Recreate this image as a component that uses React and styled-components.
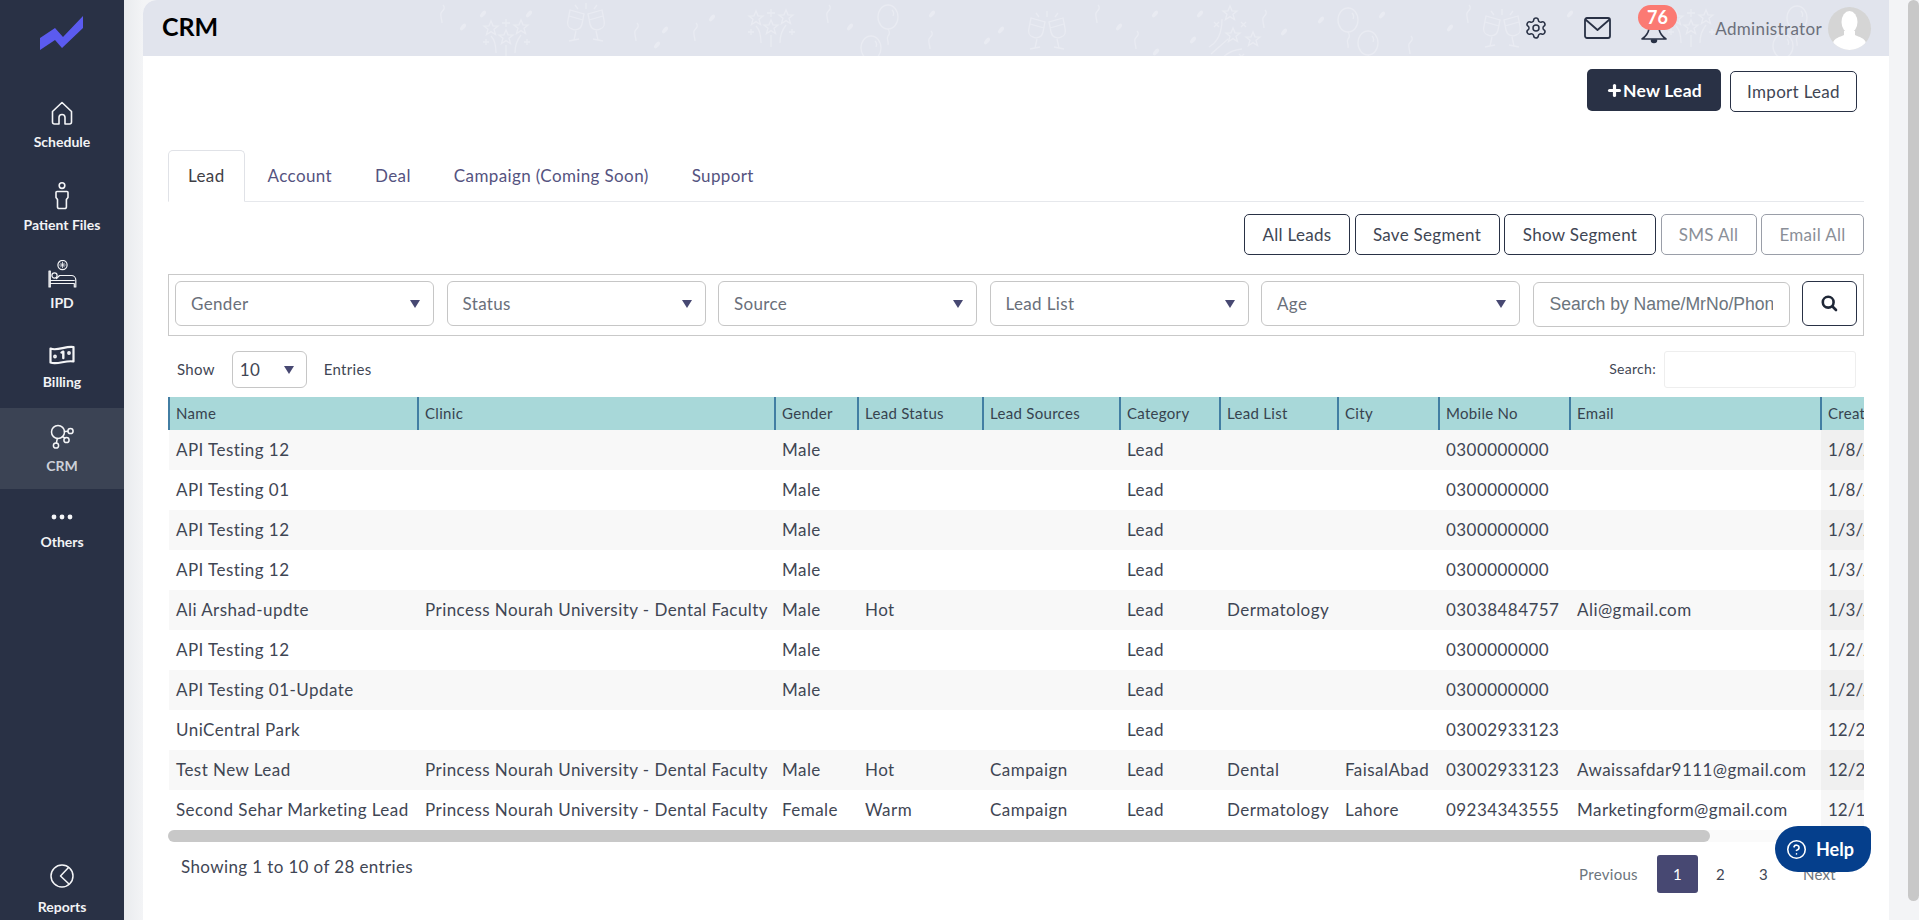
import React from "react";
import styled, { createGlobalStyle } from "styled-components";
import { Settings, CircleHelp, Plus } from "lucide-react";

const GlobalStyle = createGlobalStyle`
  html, body {
    margin: 0;
    height: 100%;
    overflow: hidden;
    background: #f3f4f6;
    font-family: "Lato", "Noto Sans", sans-serif;
    color: #3f4654;
  }
  * { box-sizing: border-box; }
`;

const Page = styled.div`
  display: flex;
  height: 920px;
  overflow: hidden;
`;

/* sidebar */
const Sidebar = styled.aside`
  flex: 0 0 124px;
  display: flex;
  flex-direction: column;
  background: #293145;
`;
const LogoBox = styled.div`
  height: 85px;
  flex: none;
`;
const SideItem = styled.div`
  height: ${(p) => (p.$last ? "72px" : "80.75px")};
  flex: none;
  margin-top: ${(p) => (p.$last ? "auto" : "0")};
  padding-top: 16px;
  display: flex;
  flex-direction: column;
  align-items: center;
  background: ${(p) => (p.$active ? "#3b4354" : "transparent")};
`;
const SideIcon = styled.div`
  height: 24px;
  display: flex;
  align-items: center;
  justify-content: center;
  overflow: visible;
`;
const SideLabel = styled.div`
  margin-top: ${(p) => p.$gap ?? 8}px;
  line-height: 18px;
  font-size: 14px;
  font-weight: 700;
  color: ${(p) => (p.$active ? "#ccd0d8" : "#f2f3f5")};
`;

/* main column */
const Gutter = styled.div`
  flex: 1;
  min-width: 0;
  padding: 0 30px 0 19px;
  background: linear-gradient(90deg, #e9ebee 0, #f3f4f6 19px);
`;
const Card = styled.main`
  position: relative;
  height: 920px;
  background: #fff;
  border-top-left-radius: 14px;
  overflow: hidden;
`;
const Header = styled.header`
  position: relative;
  height: 56px;
  display: flex;
  align-items: center;
  padding-left: 19px;
  background: #e1e4ed;
  overflow: hidden;
`;
const Decor = styled.svg`
  position: absolute;
  left: 0;
  top: 0;
  fill: none;
  stroke: #e9ebf2;
  stroke-width: 1.3;
`;
const Title = styled.h1`
  position: relative;
  margin: 0 0 4px;
  font-size: 25px;
  font-weight: 700;
  color: #000;
`;
const HeaderRight = styled.div`
  position: relative;
  margin-left: auto;
  display: flex;
  align-items: center;
  padding-right: 18px;
  height: 100%;
  color: #293145;
`;
const IconGap = styled.div`
  width: 36px;
`;
const BellWrap = styled.div`
  position: relative;
  width: 30px;
  height: 30px;
  margin: 3px 0 0 28px;
`;
const Badge = styled.span`
  position: absolute;
  left: -1px;
  top: -10px;
  width: 39px;
  height: 25px;
  border-radius: 13px;
  background: #fb7a73;
  color: #fff;
  font-size: 18px;
  font-weight: 700;
  line-height: 25px;
  text-align: center;
`;
const UserName = styled.span`
  margin-left: auto;
  font-size: 17px;
  color: #6c707b;
  letter-spacing: 0.35px;
`;
const UserBlock = styled.div`
  display: flex;
  align-items: center;
  width: 202px;
`;
const Avatar = styled.div`
  width: 43px;
  height: 43px;
  margin-left: 6px;
  border-radius: 50%;
  background: #d5d5d5;
  overflow: hidden;
`;

const Body = styled.div`
  padding: 0 25px;
`;
const TopActions = styled.div`
  display: flex;
  justify-content: flex-end;
  align-items: flex-end;
  gap: 9px;
  height: 42px;
  margin-top: 14px;
  padding-right: 7px;
`;
const Button = styled.button`
  width: ${(p) => p.$w}px;
  height: 41px;
  padding: 0;
  border: 1px solid ${(p) => (p.$muted ? "#9a9ea8" : "#293145")};
  border-radius: 5px;
  background: #fff;
  color: ${(p) => (p.$muted ? "#8b8f98" : "#3f4654")};
  font-family: inherit;
  font-size: 17px;
  letter-spacing: 0.3px;
  white-space: nowrap;
`;
const PrimaryButton = styled.button`
  display: flex;
  align-items: center;
  justify-content: center;
  width: 134px;
  height: 42px;
  margin-bottom: 1px;
  border: 0;
  border-radius: 5px;
  background: #293145;
  color: #fff;
  font-family: inherit;
  font-size: 17.5px;
  font-weight: 700;
  letter-spacing: 0.2px;
`;

const Tabs = styled.nav`
  display: flex;
  height: 52px;
  margin-top: 38px;
  border-bottom: 1px solid #e6e8ec;
`;
const Tab = styled.div`
  height: ${(p) => (p.$active ? "52px" : "51px")};
  padding: 0 19px;
  border: 1px solid ${(p) => (p.$active ? "#e0e2e7" : "transparent")};
  border-bottom: ${(p) => (p.$active ? "1px solid #fff" : "0")};
  border-radius: 5px 5px 0 0;
  margin-right: 3px;
  line-height: 50px;
  font-size: 17px;
  letter-spacing: 0.38px;
  color: ${(p) => (p.$active ? "#3f3f46" : "#55537f")};
`;

const SegmentRow = styled.div`
  display: flex;
  justify-content: flex-end;
  gap: 4.5px;
  margin-top: 12px;
`;

const FilterBox = styled.div`
  display: grid;
  grid-template-columns: repeat(5, 259px) 257px 55px;
  justify-content: space-between;
  align-items: start;
  height: 62px;
  margin-top: 19px;
  padding: 6px 6px 0;
  border: 1px solid #c9c9c9;
`;
const Select = styled.div`
  display: flex;
  align-items: center;
  justify-content: space-between;
  height: 45px;
  padding: 0 13px 0 15px;
  border: 1px solid #c6c6c6;
  border-radius: 6px;
  font-size: 17px;
  letter-spacing: 0.35px;
  color: #6a6f7a;
`;
const Caret = styled.span`
  width: 0;
  height: 0;
  border-left: 5.5px solid transparent;
  border-right: 5.5px solid transparent;
  border-top: 8px solid #474872;
`;
const SearchInput = styled.input`
  width: 100%;
  height: 45px;
  margin-top: 1px;
  padding: 0 16px;
  border: 1px solid #c6c6c6;
  border-radius: 6px;
  font-family: "Liberation Sans", Arial, sans-serif;
  font-size: 17.6px;
  outline: none;
  &::placeholder { color: #6c757d; opacity: 1; }
`;
const SearchButton = styled.button`
  display: flex;
  align-items: center;
  justify-content: center;
  height: 45px;
  padding: 0;
  border: 1px solid #293145;
  border-radius: 6px;
  background: #fff;
`;

const ShowRow = styled.div`
  display: flex;
  align-items: center;
  height: 37px;
  margin-top: 15px;
  padding: 0 8px 2px 9px;
  font-size: 15px;
  letter-spacing: 0.3px;
  color: #3f4654;
`;
const EntriesSelect = styled(Select)`
  width: 75px;
  height: 37px;
  margin: 2px 17px 0 17px;
  padding: 0 12px 0 7px;
  color: #3f4654;
`;
const SearchLabel = styled.label`
  margin-left: auto;
  margin-right: 8px;
  font-size: 14px;
`;
const TableSearch = styled.input`
  width: 192px;
  height: 37px;
  margin-top: 2px;
  border: 1px solid #eeeeee;
  border-radius: 3px;
  outline: none;
`;

const TableClip = styled.div`
  margin-top: 9px;
  overflow: hidden;
`;
const Table = styled.table`
  width: 1816px;
  table-layout: fixed;
  border-collapse: collapse;
`;
const Th = styled.th`
  height: 33px;
  padding: 0 0 2px 6px;
  border-left: 2px solid #427ea3;
  background: #a8d8d9;
  font-size: 15px;
  font-weight: 400;
  letter-spacing: 0.3px;
  text-align: left;
  color: #37434f;
  white-space: nowrap;
  overflow: hidden;
`;
const Tr = styled.tr`
  background: ${(p) => (p.$odd ? "#f8f8f8" : "#fff")};
`;
const Td = styled.td`
  height: 40px;
  padding: 0 0 1px 7px;
  font-size: 17px;
  letter-spacing: ${(p) => (p.$sorted ? "0" : "0.45px")};
  color: #3f4654;
  white-space: nowrap;
  overflow: hidden;
  background: ${(p) => (p.$sorted ? "rgba(0,0,0,0.03)" : "transparent")};
`;
const ScrollTrack = styled.div`
  height: 12px;
  background: #fafafa;
  border-radius: 6px;
`;
const ScrollThumb = styled.div`
  height: 100%;
  border-radius: 6px;
  background: #c8c8c8;
`;

const Footer = styled.div`
  display: flex;
  justify-content: space-between;
  align-items: flex-start;
  margin-top: 13px;
  padding: 0 11px 0 13px;
`;
const Info = styled.div`
  margin-top: -1px;
  line-height: 26px;
  font-size: 17px;
  letter-spacing: 0.38px;
`;
const Pager = styled.div`
  display: flex;
  gap: 2px;
`;
const PageLink = styled.div`
  min-width: 41px;
  height: 38px;
  padding: 0 ${(p) => (p.$text ? "17px" : "0")};
  border-radius: 3px;
  background: ${(p) => (p.$active ? "#474872" : "transparent")};
  color: ${(p) => (p.$active ? "#fff" : p.$text ? "#6c757d" : "#3f4654")};
  font-size: 15px;
  line-height: 38px;
  text-align: center;
  letter-spacing: 0.3px;
`;

const HelpButton = styled.button`
  position: fixed;
  left: 1775px;
  top: 826px;
  display: flex;
  align-items: center;
  gap: 9px;
  width: 96px;
  height: 46px;
  padding: 0 0 0 11px;
  border: 0;
  border-radius: 24px 8px 24px 24px;
  background: #053f8c;
  color: #fff;
  font-family: inherit;
  font-size: 18px;
  font-weight: 700;
`;
const PageScrollThumb = styled.div`
  position: fixed;
  right: 0;
  top: 0;
  width: 11px;
  height: 901px;
  border-radius: 6px;
  background: #c8c8c8;
`;

const columns = [
  ["Name", 249],
  ["Clinic", 357],
  ["Gender", 83],
  ["Lead Status", 125],
  ["Lead Sources", 137],
  ["Category", 100],
  ["Lead List", 118],
  ["City", 101],
  ["Mobile No", 131],
  ["Email", 251],
  ["Created On", 164],
];

const PNU = "Princess Nourah University - Dental Faculty";
const rows = [
  ["API Testing 12", "", "Male", "", "", "Lead", "", "", "0300000000", "", "1/8/2024"],
  ["API Testing 01", "", "Male", "", "", "Lead", "", "", "0300000000", "", "1/8/2024"],
  ["API Testing 12", "", "Male", "", "", "Lead", "", "", "0300000000", "", "1/3/2024"],
  ["API Testing 12", "", "Male", "", "", "Lead", "", "", "0300000000", "", "1/3/2024"],
  ["Ali Arshad-updte", PNU, "Male", "Hot", "", "Lead", "Dermatology", "", "03038484757", "Ali@gmail.com", "1/3/2024"],
  ["API Testing 12", "", "Male", "", "", "Lead", "", "", "0300000000", "", "1/2/2024"],
  ["API Testing 01-Update", "", "Male", "", "", "Lead", "", "", "0300000000", "", "1/2/2024"],
  ["UniCentral Park", "", "", "", "", "Lead", "", "", "03002933123", "", "12/28/2023"],
  ["Test New Lead", PNU, "Male", "Hot", "Campaign", "Lead", "Dental", "FaisalAbad", "03002933123", "Awaissafdar9111@gmail.com", "12/20/2023"],
  ["Second Sehar Marketing Lead", PNU, "Female", "Warm", "Campaign", "Lead", "Dermatology", "Lahore", "09234343555", "Marketingform@gmail.com", "12/19/2023"],
];

const Logo = () => (
  <svg width="124" height="85" viewBox="0 0 124 85">
    <polygon points="40,50 40,38 55,28 63,37 83,16 83,28 62,48 55,40" fill="#5b5bf0" />
  </svg>
);

const line = { fill: "none", stroke: "#f4f5f7", strokeLinecap: "round", strokeLinejoin: "round" };

const HomeIcon = () => (
  <svg width="24" height="24" viewBox="0 0 24 24" {...line} strokeWidth="1.6">
    <path d="M2.5 10.5 12 1.500l9.500 9V21a2 2 0 0 1-2 2H15v-6.500a3 3 0 0 0-6 0V23H4.500a2 2 0 0 1-2-2Z" />
  </svg>
);
const PersonIcon = () => (
  <svg width="14" height="28" viewBox="0 0 14 28" {...line} strokeWidth="1.6" style={{ marginTop: 4 }}>
    <circle cx="7" cy="3.600" r="2.800" />
    <path d="M2 9.500h10a1 1 0 0 1 1 1v5l-1.600 2v7.500a1.500 1.500 0 0 1-1.500 1.500H4a1.500 1.500 0 0 1-1.500-1.500V17.500L1 15.500v-5a1 1 0 0 1 1-1Z" />
  </svg>
);
const BedIcon = () => (
  <svg width="29" height="28" viewBox="0 0 29 28" {...line} strokeWidth="1.200" style={{ marginTop: -2 }}>
    <circle cx="14.500" cy="5" r="4.600" />
    <path d="M14.500 2.200v5.600M11.700 5h5.600M12.500 3l4 4M16.500 3l-4 4" strokeWidth=".8" />
    <path d="M1 11v16h1.300V11ZM2.300 23.500h24v3.500h1.500v-7a4.500 4.500 0 0 0-4.500-4.500H11.500l-3 3" />
    <path d="M2.300 20.500h24" />
    <circle cx="6.500" cy="15.500" r="2.600" />
  </svg>
);
const BillIcon = () => (
  <svg width="26" height="20" viewBox="0 0 26 20" {...line} strokeWidth="2.200">
    <path d="M1.500 3.500C8 6.500 17 .5 24.500 2v14.500C17 15 8 20 1.500 17.500Z" />
    <path d="M12.500 7.500l1.800-.8v6.300" strokeWidth="2.400" />
    <circle cx="6" cy="11.500" r=".8" />
    <circle cx="20" cy="8" r=".8" />
  </svg>
);
const CrmIcon = () => (
  <svg width="26" height="26" viewBox="0 0 26 26" {...line} strokeWidth="1.500">
    <circle cx="9" cy="9" r="6.500" />
    <circle cx="21.500" cy="8" r="2.600" />
    <circle cx="17.500" cy="17" r="2.600" />
    <circle cx="7" cy="22.500" r="2.600" />
    <path d="M15.500 8.600 18.900 8.200M13.500 13.700l2.400 1.300M8.300 15.500 7.400 19.900" />
  </svg>
);
const DotsIcon = () => (
  <svg width="22" height="6" viewBox="0 0 22 6" fill="#f4f5f7">
    <circle cx="3" cy="3" r="2.400" />
    <circle cx="11" cy="3" r="2.400" />
    <circle cx="19" cy="3" r="2.400" />
  </svg>
);
const ReportsIcon = () => (
  <svg width="24" height="24" viewBox="0 0 24 24" {...line} strokeWidth="1.500">
    <circle cx="12" cy="12" r="11" />
    <path d="M18.500 3.500 10.500 12l8.500 8" />
  </svg>
);

const MailIcon = () => (
  <svg width="27" height="22" viewBox="0 0 27 22" fill="none" stroke="#293145" strokeWidth="1.800" strokeLinejoin="round">
    <rect x="1" y="1" width="25" height="20" rx="2" />
    <path d="M1.500 2.500 13.500 13l12-10.500" />
  </svg>
);
const BellIcon = () => (
  <svg width="30" height="30" viewBox="0 0 30 30" fill="none" stroke="#293145" strokeWidth="1.600" strokeLinejoin="round">
    <path d="M3 24c3-2 6-5 7-10 1-4 2-6 5-6s4 2 5 6c1 5 4 8 7 10Z" />
    <path d="M12.500 25a2.500 2.500 0 0 0 5 0Z" fill="#293145" />
  </svg>
);
const AvatarShape = () => (
  <svg width="43" height="43" viewBox="0 0 43 43" fill="#fff">
    <ellipse cx="21.500" cy="15" rx="8" ry="11" />
    <path d="M16 24h11v4c4 2 10 3 11 8v7H5v-7c1-5 7-6 11-8Z" />
  </svg>
);
const SearchGlyph = () => (
  <svg width="17" height="17" viewBox="0 0 17 17" fill="none" stroke="#1f2737" strokeWidth="2.600" strokeLinecap="round">
    <circle cx="7.200" cy="7.200" r="5.400" />
    <path d="M11.500 11.500 15 15" />
  </svg>
);

const sprites = (
  <defs>
    <path id="sq" d="M3 0c3 3 0 5-2 8-1 3 1 6 1 10" />
    <ellipse id="lf" rx="2" ry="4" transform="rotate(40)" fill="#e9ebf2" stroke="none" />
    <g id="star5">
      <path d="M0-7 2-2.200 7-2 3 1.200 4.500 6.500 0 3.600-4.500 6.500-3 1.200-7-2-2-2.200Z" />
    </g>
    <g id="fw">
      <use href="#star5" x="-14" y="-8" />
      <use href="#star5" x="16" y="-9" />
      <use href="#star5" x="1" y="1" />
      <path d="M-14 0c4 4 5 10 5 17M16-1c-4 5-6 11-6 18M1 9v12M1-17v8M-3-13h8M-22 6h6M-19 3v6M19 6h6M22 3v6" />
    </g>
    <g id="glass">
      <path d="M-16-14-2-10l-2 10c-1 5-6 7-10 5-4-1-5-5-4-9ZM-17-8l14 4M-10 7-12 16M-17 17l10-2" />
      <path d="M16-14 2-10l2 10c1 5 6 7 10 5 4-1 5-5 4-9ZM17-8 3-4M10 7 12 16M17 17 7 15" />
      <path d="M0-15v-6M-8-15l-3-4M8-15l3-4" />
    </g>
    <g id="ball">
      <ellipse cx="0" cy="0" rx="10" ry="12" />
      <path d="M0 12c2 3 2 5 0 7-2 3 1 5 0 9M4-7c2 2 2 4 1 6" />
    </g>
    <g id="shoot">
      <use href="#star5" x="0" y="-19" />
      <use href="#star5" x="3" y="3" />
      <use href="#star5" x="23" y="7" />
      <path d="M-21 15c9-5 13-15 13-28M-19 22-2 7M-12 34c4-11 14-16 24-17M-16-10l5 5M-11-10l-5 5M11-10l5 5M16-10l-5 5M9 22l5 5M14 22l-5 5" />
    </g>
  </defs>
);

// page coordinates read off the reference, minus the card's x of 143
const place = (id, x, y) => <use key={`${id}${x}${y}`} href={`#${id}`} x={x - 143} y={y} />;
const decorItems = [
  ["sq", 440, 5], ["lf", 463, 27], ["lf", 483, 14], ["lf", 529, 14], ["fw", 505, 36], ["glass", 586, 24],
  ["sq", 634, 23], ["lf", 665, 30], ["lf", 657, 45], ["sq", 693, 23], ["lf", 712, 18], ["fw", 770, 26],
  ["sq", 826, 5], ["lf", 850, 27], ["ball", 888, 17], ["ball", 871, 48], ["lf", 932, 14], ["sq", 928, 31],
  ["lf", 1001, 30], ["lf", 987, 41], ["glass", 1047, 32], ["sq", 1095, 5], ["lf", 1119, 27], ["lf", 1155, 14],
  ["sq", 1134, 31], ["lf", 1156, 52], ["lf", 1193, 40], ["lf", 1200, 14], ["shoot", 1230, 32], ["sq", 1262, 10],
  ["lf", 1284, 32], ["lf", 1321, 20], ["ball", 1348, 20], ["ball", 1368, 43], ["lf", 1382, 15], ["sq", 1408, 36],
  ["lf", 1450, 28], ["sq", 1466, 5], ["glass", 1502, 30], ["lf", 1570, 14], ["fw", 1690, 26], ["ball", 1797, 18],
  ["ball", 1783, 46],
];

const navItems = [
  ["Schedule", HomeIcon, 8],
  ["Patient Files", PersonIcon, 10],
  ["IPD", BedIcon, 7],
  ["Billing", BillIcon, 6],
  ["CRM", CrmIcon, 9],
  ["Others", DotsIcon, 4],
];

export default function App() {
  return (
    <>
      <GlobalStyle />
      <Page>
        <Sidebar>
          <LogoBox>
            <Logo />
          </LogoBox>
          {navItems.map(([label, Icon, gap]) => (
            <SideItem key={label} $active={label === "CRM"}>
              <SideIcon><Icon /></SideIcon>
              <SideLabel $gap={gap} $active={label === "CRM"}>{label}</SideLabel>
            </SideItem>
          ))}
          <SideItem $last>
            <SideIcon><ReportsIcon /></SideIcon>
            <SideLabel $gap={10}>Reports</SideLabel>
          </SideItem>
        </Sidebar>

        <Gutter>
          <Card>
            <Header>
              <Decor width="1746" height="56">
                {sprites}
                {decorItems.map(([id, x, y]) => place(id, x, y))}
              </Decor>
              <Title>CRM</Title>
              <HeaderRight>
                <Settings size={24} strokeWidth={1.5} />
                <IconGap />
                <MailIcon />
                <BellWrap>
                  <BellIcon />
                  <Badge>76</Badge>
                </BellWrap>
                <UserBlock>
                  <UserName>Administrator</UserName>
                  <Avatar><AvatarShape /></Avatar>
                </UserBlock>
              </HeaderRight>
            </Header>

            <Body>
              <TopActions>
                <PrimaryButton>
                  <Plus size={17} strokeWidth={4.5} />
                  New Lead
                </PrimaryButton>
                <Button $w={127}>Import Lead</Button>
              </TopActions>

              <Tabs>
                <Tab $active>Lead</Tab>
                <Tab>Account</Tab>
                <Tab>Deal</Tab>
                <Tab>Campaign (Coming Soon)</Tab>
                <Tab>Support</Tab>
              </Tabs>

              <SegmentRow>
                <Button $w={106}>All Leads</Button>
                <Button $w={145}>Save Segment</Button>
                <Button $w={152}>Show Segment</Button>
                <Button $w={96} $muted>SMS All</Button>
                <Button $w={103} $muted>Email All</Button>
              </SegmentRow>

              <FilterBox>
                {["Gender", "Status", "Source", "Lead List", "Age"].map((name) => (
                  <Select key={name}>
                    {name}
                    <Caret />
                  </Select>
                ))}
                <SearchInput placeholder="Search by Name/MrNo/Phone" />
                <SearchButton><SearchGlyph /></SearchButton>
              </FilterBox>

              <ShowRow>
                Show
                <EntriesSelect>
                  10
                  <Caret />
                </EntriesSelect>
                Entries
                <SearchLabel>Search:</SearchLabel>
                <TableSearch />
              </ShowRow>

              <TableClip>
                <Table>
                  <colgroup>
                    {columns.map(([name, width]) => (
                      <col key={name} width={width} />
                    ))}
                  </colgroup>
                  <thead>
                    <tr>
                      {columns.map(([name]) => (
                        <Th key={name}>{name}</Th>
                      ))}
                    </tr>
                  </thead>
                  <tbody>
                    {rows.map((row, i) => (
                      <Tr key={i} $odd={i % 2 === 0}>
                        {row.map((cell, j) => (
                          <Td key={j} $sorted={j === 10}>{cell}</Td>
                        ))}
                      </Tr>
                    ))}
                  </tbody>
                </Table>
              </TableClip>
              <ScrollTrack>
                <ScrollThumb style={{ width: `${(1542 / 1696) * 100}%` }} />
              </ScrollTrack>

              <Footer>
                <Info>Showing 1 to 10 of 28 entries</Info>
                <Pager>
                  <PageLink $text>Previous</PageLink>
                  <PageLink $active>1</PageLink>
                  <PageLink>2</PageLink>
                  <PageLink>3</PageLink>
                  <PageLink $text>Next</PageLink>
                </Pager>
              </Footer>
            </Body>
          </Card>
        </Gutter>
      </Page>
      <HelpButton>
        <CircleHelp size={21} strokeWidth={1.8} />
        Help
      </HelpButton>
      <PageScrollThumb />
    </>
  );
}
